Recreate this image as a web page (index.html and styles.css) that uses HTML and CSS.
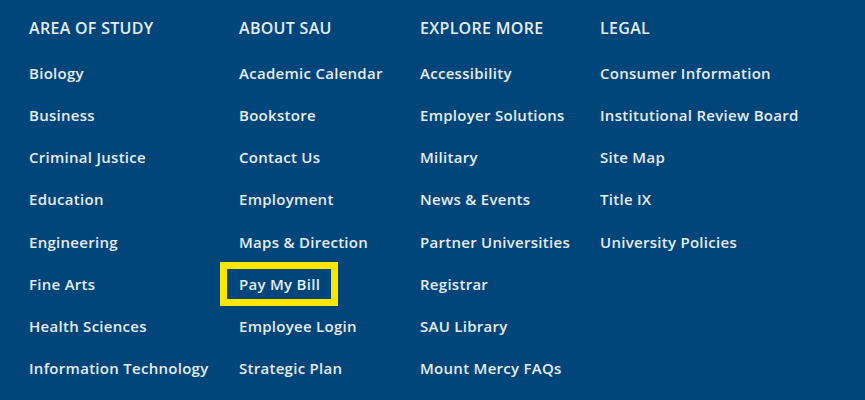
FILE: index.html
```html
<!DOCTYPE html>
<html lang="en">
<head>
<meta charset="utf-8">
<title>Footer</title>
<link rel="stylesheet" href="styles.css">
</head>
<body>
<footer class="footer">
  <nav class="col">
    <h2 class="col-title">AREA OF STUDY</h2>
    <ul class="links">
      <li><a href="#">Biology</a></li>
      <li><a href="#">Business</a></li>
      <li><a href="#">Criminal Justice</a></li>
      <li><a href="#">Education</a></li>
      <li><a href="#">Engineering</a></li>
      <li><a href="#">Fine Arts</a></li>
      <li><a href="#">Health Sciences</a></li>
      <li><a href="#">Information Technology</a></li>
    </ul>
  </nav>
  <nav class="col">
    <h2 class="col-title">ABOUT SAU</h2>
    <ul class="links">
      <li><a href="#">Academic Calendar</a></li>
      <li><a href="#">Bookstore</a></li>
      <li><a href="#">Contact Us</a></li>
      <li><a href="#">Employment</a></li>
      <li><a href="#">Maps &amp; Direction</a></li>
      <li><a href="#" class="highlight">Pay My Bill</a></li>
      <li><a href="#">Employee Login</a></li>
      <li><a href="#">Strategic Plan</a></li>
    </ul>
  </nav>
  <nav class="col">
    <h2 class="col-title">EXPLORE MORE</h2>
    <ul class="links">
      <li><a href="#">Accessibility</a></li>
      <li><a href="#">Employer Solutions</a></li>
      <li><a href="#">Military</a></li>
      <li><a href="#">News &amp; Events</a></li>
      <li><a href="#">Partner Universities</a></li>
      <li><a href="#">Registrar</a></li>
      <li><a href="#">SAU Library</a></li>
      <li><a href="#">Mount Mercy FAQs</a></li>
    </ul>
  </nav>
  <nav class="col">
    <h2 class="col-title">LEGAL</h2>
    <ul class="links">
      <li><a href="#">Consumer Information</a></li>
      <li><a href="#">Institutional Review Board</a></li>
      <li><a href="#">Site Map</a></li>
      <li><a href="#">Title IX</a></li>
      <li><a href="#">University Policies</a></li>
    </ul>
  </nav>
</footer>
</body>
</html>
```

FILE: styles.css
```css
html, body {
  margin: 0;
  padding: 0;
  background: #00467b;
}

body {
  font-family: "Open Sans", "Noto Sans", sans-serif;
  color: #e8ebf1;
  height: 400px;
  overflow: hidden;
}

.footer {
  display: grid;
  grid-template-columns: 210px 181px 180px auto;
  padding: 18px 0 0 29px;
}

.col-title {
  margin: 0 0 14px 0;
  font-size: 16px;
  line-height: 20px;
  font-weight: 600;
  letter-spacing: 0.3px;
}

.links {
  list-style: none;
  margin: 0;
  padding: 0;
}

.links li {
  height: 42.15px;
  display: flex;
  align-items: center;
}

.links a {
  color: #e8ebf1;
  text-decoration: none;
  font-size: 15px;
  line-height: 22px;
  font-weight: 600;
  letter-spacing: 0.28px;
}

.links a.highlight {
  padding: 4px 11px 4px 12px;
  margin-left: -12px;
  outline: 7px solid #ffe600;
}
```
